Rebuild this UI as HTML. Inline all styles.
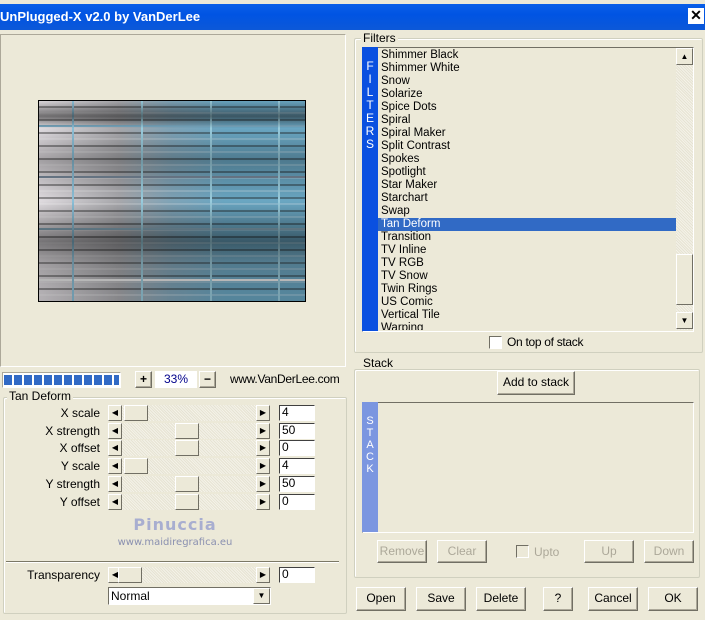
<!DOCTYPE html>
<html><head><style>
*{box-sizing:border-box;margin:0;padding:0}
body{width:705px;height:620px;background:#ece9d8;font-family:"Liberation Sans",sans-serif;font-size:11px;color:#000;position:relative;overflow:hidden}
.a{position:absolute}
.sunk{border:1px solid;border-color:#aca899 #fff #fff #aca899}
.grp{border:1px solid #d0d0bf;border-radius:2px;box-shadow:inset 1px 1px 0 #fff}
.lbl{position:absolute;background:#ece9d8;padding:0 2px;line-height:12px}
.btn{position:absolute;background:#ece9d8;border:1px solid;border-color:#fff #716f64 #716f64 #fff;box-shadow:inset -1px -1px 0 #aca899;text-align:center;font-size:12px}
.dis{color:#aca899}
.trk{position:absolute;height:16px;background:repeating-linear-gradient(45deg,#f4f2e8 0 1px,#e6e3d3 1px 2px)}
.arr{position:absolute;width:14px;height:16px;background:#ece9d8;border:1px solid;border-color:#fff #716f64 #716f64 #fff}
.thumb{position:absolute;width:24px;height:16px;background:#ece9d8;border:1px solid;border-color:#fff #716f64 #716f64 #fff}
.inp{position:absolute;width:36px;height:16px;background:#fff;border:1px solid;border-color:#404040 #fff #fff #404040;padding-left:2px;font-size:12px;line-height:13px}
.rl{position:absolute;width:100px;text-align:right;font-size:12px;line-height:16px}
.it{height:13px;line-height:13px;padding-left:3px;font-size:11.5px;white-space:nowrap}
</style></head><body>
<div class="a" style="left:0;top:0;width:705px;height:4px;background:#ece9d8"></div>
<div class="a" style="left:0;top:4px;width:705px;height:26px;background:linear-gradient(#0a5fe8,#0054e3 40%,#0c58d8);color:#fff;font-weight:bold;font-size:13px;line-height:26px;font-family:'Liberation Sans',sans-serif">UnPlugged-X v2.0 by VanDerLee</div>
<div class="a" style="left:688px;top:8px;width:16px;height:16px;background:#fff;color:#000;font-weight:bold;text-align:center;line-height:15px;font-size:14px">✕</div>

<!-- preview -->
<div class="a sunk" style="left:0;top:34px;width:346px;height:333px"></div>
<div class="a" style="left:38px;top:100px;width:268px;height:202px;border:1px solid #000;background:
linear-gradient(90deg,transparent 33px,#8cc0d8 33px 35px,transparent 35px 102px,#9cd 102px 104px,transparent 104px 171px,#9cd 171px 173px,transparent 173px 239px,#9cd 239px 241px,transparent 241px),
linear-gradient(transparent 24px,#78a8c0 24px 26px,transparent 26px 75px,#789 75px 77px,transparent 77px 127px,#8ab 127px 129px,transparent 129px 178px,#eee 178px 180px,transparent 180px),
repeating-linear-gradient(#0000 0 5px,#1a1a1a66 5px 7px,#0000 7px 11px,#fff3 11px 13px),
linear-gradient(90deg,#e0dce0 0%,#a8a8ac 30%,#7fa4b8 50%,#6aa6c2 70%,#6aa6c2 100%);"></div>
<div class="a" style="left:38px;top:100px;width:268px;height:202px;background:linear-gradient(#0000 0%,#1118 8%,#0000 14%,#0004 30%,#0000 50%,#0007 70%,#2225 80%,#0003 95%);"></div>

<!-- progress -->
<div class="a sunk" style="left:2px;top:372px;width:119px;height:16px;padding:2px 1px;background:#fff"><div style="height:10px;background:repeating-linear-gradient(90deg,#316ac5 0 8px,#fff 8px 10px)"></div></div>
<div class="btn" style="left:135px;top:371px;width:17px;height:17px;line-height:14px;font-weight:bold">+</div>
<div class="a" style="left:155px;top:371px;width:42px;height:17px;background:#fff;color:#00008b;text-align:center;line-height:17px;font-size:12px">33%</div>
<div class="btn" style="left:199px;top:371px;width:17px;height:17px;line-height:14px;font-weight:bold">−</div>
<div class="a" style="left:230px;top:372px;font-size:12px;line-height:14px;letter-spacing:-0.3px">www.VanDerLee.com</div>

<!-- Tan Deform group -->
<div class="a grp" style="left:3px;top:397px;width:344px;height:217px"></div>
<div class="lbl" style="left:7px;top:390px;font-size:12px">Tan Deform</div>

<div id="rows"></div>
<div class="a" style="left:0;top:515px;width:350px;text-align:center;color:#a8aed0;font-size:16px;font-weight:bold;letter-spacing:1px;font-family:'DejaVu Sans',sans-serif">Pinuccia</div>
<div class="a" style="left:0;top:537px;width:350px;text-align:center;color:#8a90b0;font-size:10px;font-family:'DejaVu Sans',sans-serif">www.maidiregrafica.eu</div>
<div class="a" style="left:6px;top:561px;width:333px;height:2px;background:#7b7866;border-bottom:1px solid #fff"></div>

<!-- Filters -->
<div class="a grp" style="left:354px;top:38px;width:349px;height:315px"></div>
<div class="lbl" style="left:361px;top:32px;font-size:12px">Filters</div>
<div class="a sunk" style="left:362px;top:47px;width:332px;height:285px;border-color:#716f64 #fff #fff #716f64"></div>
<div class="a" style="left:362px;top:47px;width:16px;height:284px;background:#0a50e0;color:#fff;text-align:center;font-size:12px;line-height:13px;padding-top:13px">F<br>I<br>L<br>T<br>E<br>R<br>S</div>
<div class="a" style="left:378px;top:49px;width:298px;height:281px;overflow:hidden">
<div class="it">Shimmer Black</div><div class="it">Shimmer White</div><div class="it">Snow</div><div class="it">Solarize</div><div class="it">Spice Dots</div><div class="it">Spiral</div><div class="it">Spiral Maker</div><div class="it">Split Contrast</div><div class="it">Spokes</div><div class="it">Spotlight</div><div class="it">Star Maker</div><div class="it">Starchart</div><div class="it">Swap</div><div class="it" style="background:#316ac5;color:#fff">Tan Deform</div><div class="it">Transition</div><div class="it">TV Inline</div><div class="it">TV RGB</div><div class="it">TV Snow</div><div class="it">Twin Rings</div><div class="it">US Comic</div><div class="it">Vertical Tile</div><div class="it">Warping</div>
</div>
<div class="a" style="left:676px;top:48px;width:17px;height:282px;background:repeating-linear-gradient(45deg,#f4f2e8 0 1px,#e6e3d3 1px 2px)"></div>
<div class="arr" style="left:676px;top:48px;width:17px;height:17px;font-size:8px;text-align:center;line-height:15px">▲</div>
<div class="arr" style="left:676px;top:254px;width:17px;height:51px"></div>
<div class="arr" style="left:676px;top:312px;width:17px;height:17px;font-size:8px;text-align:center;line-height:15px">▼</div>
<div class="a" style="left:489px;top:336px;width:13px;height:13px;background:#fff;border:1px solid;border-color:#716f64 #fff #fff #716f64"></div>
<div class="a" style="left:507px;top:335px;font-size:12px;letter-spacing:-0.3px">On top of stack</div>

<!-- Stack -->
<div class="a grp" style="left:354px;top:369px;width:346px;height:209px"></div>
<div class="lbl" style="left:361px;top:357px;font-size:12px">Stack</div>
<div class="btn" style="left:497px;top:371px;width:78px;height:24px;line-height:21px">Add to stack</div>
<div class="a sunk" style="left:362px;top:402px;width:332px;height:131px;border-color:#716f64 #fff #fff #716f64"></div>
<div class="a" style="left:362px;top:402px;width:16px;height:130px;background:#7b96e0;color:#fff;text-align:center;font-size:11px;line-height:12px;padding-top:13px">S<br>T<br>A<br>C<br>K</div>
<div class="btn dis" style="left:377px;top:540px;width:50px;height:23px;line-height:20px">Remove</div>
<div class="btn dis" style="left:437px;top:540px;width:50px;height:23px;line-height:20px">Clear</div>
<div class="a" style="left:516px;top:545px;width:13px;height:13px;border:1px solid;border-color:#716f64 #fff #fff #716f64"></div>
<div class="a dis" style="left:534px;top:545px;font-size:12px">Upto</div>
<div class="btn dis" style="left:584px;top:540px;width:50px;height:23px;line-height:20px">Up</div>
<div class="btn dis" style="left:644px;top:540px;width:50px;height:23px;line-height:20px">Down</div>

<div class="btn" style="left:356px;top:587px;width:50px;height:24px;line-height:21px">Open</div>
<div class="btn" style="left:416px;top:587px;width:50px;height:24px;line-height:21px">Save</div>
<div class="btn" style="left:476px;top:587px;width:50px;height:24px;line-height:21px">Delete</div>
<div class="btn" style="left:543px;top:587px;width:30px;height:24px;line-height:21px">?</div>
<div class="btn" style="left:588px;top:587px;width:50px;height:24px;line-height:21px">Cancel</div>
<div class="btn" style="left:648px;top:587px;width:50px;height:24px;line-height:21px">OK</div>

<!-- select -->
<div class="a" style="left:108px;top:587px;width:163px;height:18px;background:#fff;border:1px solid;border-color:#716f64 #fff #fff #716f64;font-size:12px;line-height:16px;padding-left:2px">Normal</div>
<div class="arr" style="left:253px;top:588px;width:17px;height:16px;font-size:8px;text-align:center;line-height:14px">▼</div>

<script>
var rows=[["X scale",405,130,"4"],["X strength",423,181,"50"],["X offset",440,181,"0"],["Y scale",458,130,"4"],["Y strength",476,181,"50"],["Y offset",494,181,"0"],["Transparency",567,124,"0"]];
var h="";
rows.forEach(function(r){var y=r[1];
h+='<div class="rl" style="left:0;top:'+y+'px">'+r[0]+'</div>'+
'<div class="trk" style="left:108px;top:'+y+'px;width:162px"></div>'+
'<div class="arr" style="left:108px;top:'+y+'px;font-size:8px;text-align:center;line-height:14px">◀</div>'+
'<div class="thumb" style="left:'+(r[2]-6)+'px;top:'+y+'px"></div>'+
'<div class="arr" style="left:256px;top:'+y+'px;font-size:8px;text-align:center;line-height:14px">▶</div>'+
'<div class="inp" style="left:279px;top:'+y+'px">'+r[3]+'</div>';});
document.getElementById("rows").outerHTML=h;
</script>
</body></html>
